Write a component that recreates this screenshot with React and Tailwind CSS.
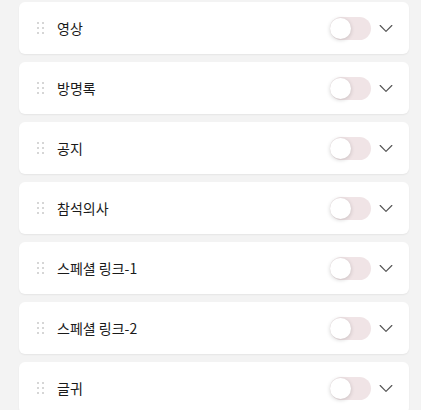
import * as React from 'react'

const sections = ['영상', '방명록', '공지', '참석의사', '스페셜 링크-1', '스페셜 링크-2', '글귀']

function DragHandle() {
  return (
    <div className="grid grid-cols-2 gap-x-[3px] gap-y-[3px] w-[7px]">
      {[0, 1, 2, 3, 4, 5].map((i) => (
        <span key={i} className="block w-[2px] h-[2px] rounded-full bg-[#c8c8c8]" />
      ))}
    </div>
  )
}

function Toggle() {
  return (
    <div className="relative w-[41px] h-[23px] rounded-full bg-[#f0e4e6]">
      <span className="absolute left-0 top-[1px] w-[21px] h-[21px] rounded-full bg-white shadow-[0_1px_4px_rgba(0,0,0,0.18)]" />
    </div>
  )
}

function Chevron() {
  return (
    <svg width="20" height="20" viewBox="0 0 24 24" fill="none" stroke="#555" strokeWidth="1.4" strokeLinecap="round" strokeLinejoin="round">
      <path d="M5 9l7 7 7-7" />
    </svg>
  )
}

export default function App() {
  return (
    <div className="min-h-screen bg-[#f3f3f3] pl-[19px] pr-[12px] pt-[2px] flex flex-col gap-2 text-[#1a1a1a]" style={{ fontFamily: '"Noto Sans CJK KR", "Noto Sans", sans-serif' }}>
      {sections.map((name) => (
        <div key={name} className="h-[52px] bg-white rounded-md shadow-[0_1px_2px_rgba(0,0,0,0.06)] flex items-center pl-[18px] pr-[13px]">
          <DragHandle />
          <span className="ml-[13px] text-[14px] leading-none">{name}</span>
          <div className="ml-auto flex items-center gap-[5px]">
            <Toggle />
            <Chevron />
          </div>
        </div>
      ))}
    </div>
  )
}
